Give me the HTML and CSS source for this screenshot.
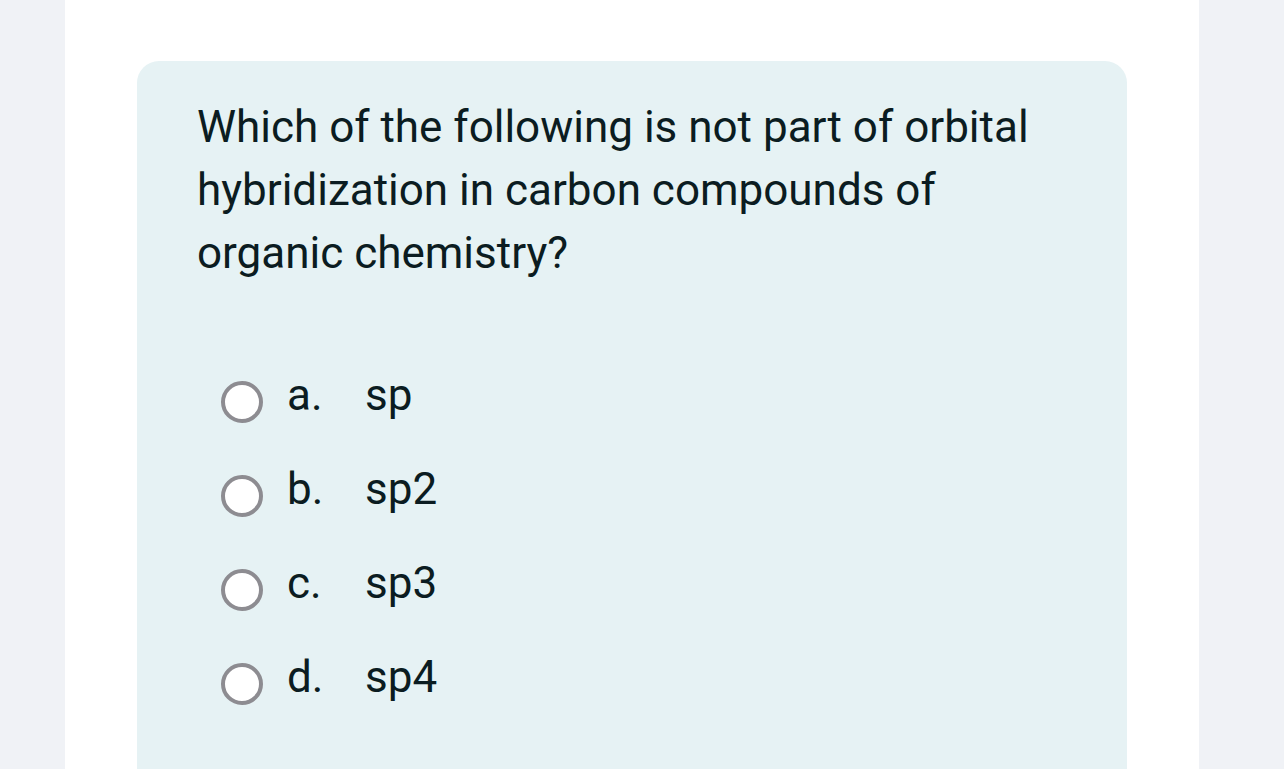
FILE: index.html
```html
<!DOCTYPE html>
<html lang="en">
<head>
<meta charset="utf-8">
<title>Quiz question</title>
<link rel="stylesheet" href="styles.css">
</head>
<body>
<div class="page">
  <div class="card">
    <p class="question">Which of the following is not part of orbital hybridization in carbon compounds of organic chemistry?</p>
    <div class="options">
      <label class="option"><span class="radio"></span><span class="text"><span class="letter">a.</span><span class="answer">sp</span></span></label>
      <label class="option"><span class="radio"></span><span class="text"><span class="letter">b.</span><span class="answer">sp2</span></span></label>
      <label class="option"><span class="radio"></span><span class="text"><span class="letter">c.</span><span class="answer">sp3</span></span></label>
      <label class="option"><span class="radio"></span><span class="text"><span class="letter">d.</span><span class="answer">sp4</span></span></label>
    </div>
  </div>
</div>
</body>
</html>
```

FILE: styles.css
```css
html, body {
  margin: 0;
  padding: 0;
  height: 100%;
  overflow: hidden;
}
body {
  background: #f0f2f6;
  font-family: Roboto, "Noto Sans", sans-serif;
  color: #0b1c21;
}
.page {
  margin-left: 65px;
  width: 1134px;
  height: 100%;
  background: #ffffff;
  padding-top: 61px;
  box-sizing: border-box;
}
.card {
  margin-left: 72px;
  width: 990px;
  height: 100%;
  background: #e6f2f4;
  border-radius: 22px 22px 0 0;
  padding: 35px 60px 0 60px;
  box-sizing: border-box;
}
.question {
  margin: 0;
  font-size: 44px;
  line-height: 63px;
}
.options {
  margin-top: 70px;
  display: flex;
  flex-direction: column;
  padding-left: 24px;
}
.option {
  display: flex;
  align-items: center;
  height: 94px;
}
.radio {
  width: 42px;
  height: 42px;
  box-sizing: border-box;
  border: 4px solid #8d8c91;
  border-radius: 50%;
  background: #ffffff;
  flex: none;
}
.text {
  display: flex;
  margin-left: 24px;
  font-size: 44px;
  line-height: 52px;
  margin-bottom: 14px;
}
.letter {
  width: 78px;
}
```
